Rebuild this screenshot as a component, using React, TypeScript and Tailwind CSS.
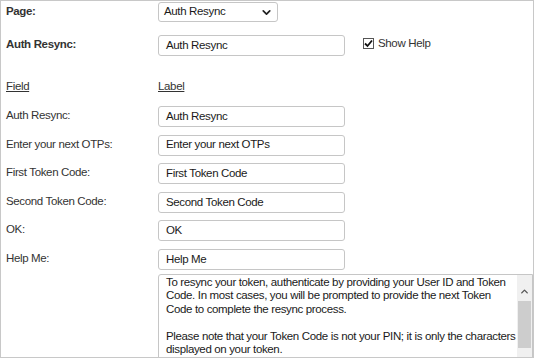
import { ChevronDown, ChevronUp } from 'lucide-react'

// ─── Data ─────────────────────────────────────────────────────────────────────

const FIELDS = [
  { field: 'Auth Resync:', label: 'Auth Resync' },
  { field: 'Enter your next OTPs:', label: 'Enter your next OTPs' },
  { field: 'First Token Code:', label: 'First Token Code' },
  { field: 'Second Token Code:', label: 'Second Token Code' },
  { field: 'OK:', label: 'OK' },
  { field: 'Help Me:', label: 'Help Me' },
]

const HELP_TEXT = [
  'To resync your token, authenticate by providing your User ID and Token Code. In most cases, you will be prompted to provide the next Token Code to complete the resync process.',
  'Please note that your Token Code is not your PIN; it is only the characters displayed on your token.',
]

// ─── Bits ─────────────────────────────────────────────────────────────────────

function TextBox({ value }: { value: string }) {
  return (
    <div className="w-[187px] h-[21px] flex items-center border border-[#c6c6c6] rounded-[3px] bg-white pl-[7px] text-[11.5px] tracking-[-0.35px] text-[#1a1a1a] leading-none">
      {value}
    </div>
  )
}

function Row({ label, bold, children, className = '' }: { label: string; bold?: boolean; children: React.ReactNode; className?: string }) {
  return (
    <div className={`flex items-start ${className}`}>
      <div className={`w-[152px] shrink-0 pt-[2px] text-[11.5px] tracking-[-0.35px] leading-[14px] text-[#333] ${bold ? 'font-bold' : ''}`}>
        {label}
      </div>
      {children}
    </div>
  )
}

// ─── App ──────────────────────────────────────────────────────────────────────

export default function App() {
  return (
    <div className="w-[535px] h-[359px] bg-white" style={{ fontFamily: '"Liberation Sans", Arial, sans-serif' }}>
      <div className="w-[534px] h-[358px] border border-[#c8c8c8] overflow-hidden pl-[5px] pt-[1px]">
        {/* Page selector */}
        <Row label="Page:" bold className="h-[20px] items-center">
          <div className="w-[120px] h-[20px] flex items-center justify-between border border-[#c6c6c6] rounded-[3px] bg-white pl-[5px] pr-[4px] text-[11.5px] tracking-[-0.35px] text-[#1a1a1a] leading-none">
            Auth Resync
            <ChevronDown size={13} strokeWidth={3.2} className="text-[#222]" />
          </div>
        </Row>

        {/* Page title */}
        <Row label="Auth Resync:" bold className="mt-[13px] items-center">
          <TextBox value="Auth Resync" />
          <label className="flex items-center ml-[18px] text-[11.5px] tracking-[-0.35px] text-[#333]">
            <span className="w-[11px] h-[11px] border border-[#555] bg-white flex items-center justify-center mr-[4px]">
              <svg width="9" height="9" viewBox="0 0 9 9">
                <path d="M1 4.5 L3.5 7 L8 1.5" fill="none" stroke="#111" strokeWidth="1.8" />
              </svg>
            </span>
            Show Help
          </label>
        </Row>

        {/* Header */}
        <div className="flex mt-[23px] text-[11.5px] tracking-[-0.35px] leading-[14px] text-[#333]">
          <span className="w-[152px] underline">Field</span>
          <span className="underline">Label</span>
        </div>

        {/* Field rows */}
        <div className="flex flex-col gap-[7.6px] mt-[13px]">
          {FIELDS.map(f => (
            <Row key={f.field} label={f.field}>
              <TextBox value={f.label} />
            </Row>
          ))}
        </div>

        {/* Help text */}
        <div className="flex ml-[152px] mt-[4px] w-[375px] h-[100px] border border-[#c6c6c6] rounded-tl-[3px] bg-white">
          <div className="flex-1 min-w-0 pl-[7px] pt-[1px] text-[11.5px] tracking-[-0.35px] leading-[13.5px] text-[#1a1a1a]">
            <p>{HELP_TEXT[0]}</p>
            <p className="mt-[13.5px]">{HELP_TEXT[1]}</p>
          </div>
          <div className="w-[15px] shrink-0 bg-[#f0f0f0] flex flex-col items-center">
            <ChevronUp size={11} strokeWidth={3} className="text-[#555] mt-[11px]" />
            <div className="w-[13px] h-[47px] bg-[#cdcdcd] mt-[4px]" />
          </div>
        </div>
      </div>
    </div>
  )
}
